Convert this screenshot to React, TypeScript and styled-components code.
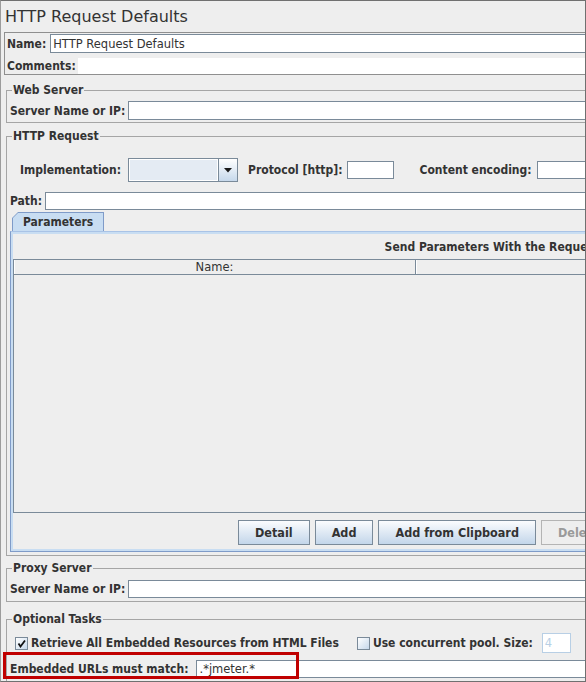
import styled, { createGlobalStyle } from "styled-components";

const BOLD = `"DejaVu Sans Condensed", "DejaVu Sans", "Liberation Sans", sans-serif`;
const PLAIN = `"DejaVu Sans", "Liberation Sans", sans-serif`;

const GlobalStyle = createGlobalStyle`
  html, body {
    margin: 0;
    padding: 0;
    background: #eeeeee;
  }
  body {
    font-family: ${PLAIN};
    color: #333333;
  }
`;

const Window = styled.div`
  position: relative;
  width: 586px;
  height: 682px;
  box-sizing: border-box;
  overflow: hidden;
  border: 1px solid #707070;
  border-left-color: #9c9c9c;
  background: #eeeeee;
`;

const Sheet = styled.div`
  width: 974px;
  display: flex;
  flex-direction: column;
`;

const Heading = styled.h1`
  margin: 0;
  height: 31px;
  padding-left: 4px;
  font: normal 16px/32px ${PLAIN};
  color: #333333;
`;

const NamePanel = styled.div`
  margin-left: 3px;
  border: 1px solid #8f8f8f;
  border-right: none;
  padding: 1px 0 0 2px;
  display: flex;
  flex-direction: column;
  gap: 5px;
`;

const Row = styled.div<{ $h: number; $mt?: number; $pl?: number; $gap?: number }>`
  display: flex;
  align-items: center;
  height: ${(p) => p.$h}px;
  margin-top: ${(p) => p.$mt ?? 0}px;
  padding-left: ${(p) => p.$pl ?? 0}px;
  gap: ${(p) => p.$gap ?? 4}px;
`;

const Label = styled.span<{ $ml?: number }>`
  margin-left: ${(p) => p.$ml ?? 0}px;
  font: bold 12px/14px ${BOLD};
  font-stretch: condensed;
  white-space: nowrap;
  color: #333333;
`;

const Field = styled.input<{ $w?: number; $h: number; $off?: boolean }>`
  box-sizing: border-box;
  flex: ${(p) => (p.$w ? "none" : "1")};
  width: ${(p) => (p.$w ? `${p.$w}px` : "auto")};
  min-width: 0;
  height: ${(p) => p.$h}px;
  margin: 0;
  padding: 0 2px;
  border: 1px solid ${(p) => (p.$off ? "#b8cfe5" : "#7a8a99")};
  border-radius: 0;
  background: #ffffff;
  font: 11.5px ${PLAIN};
  color: ${(p) => (p.$off ? "#b8cfe5" : "#333333")};
  outline: none;
`;

const CommentsArea = styled.div`
  flex: 1;
  height: 16px;
  background: #ffffff;
`;

const Group = styled.fieldset<{ $mt: number; $pb: number }>`
  margin: ${(p) => p.$mt}px 0 0 5px;
  padding: 0 0 ${(p) => p.$pb}px 3px;
  border: 1px solid #a5a5a5;
  border-right: none;
  min-inline-size: 0;
`;

const Legend = styled.legend`
  margin-left: 2px;
  padding: 0 1px;
  font: bold 12px/14px ${BOLD};
  font-stretch: condensed;
  color: #333333;
`;

const Combo = styled.div`
  display: flex;
  width: 110px;
  height: 24px;
  box-sizing: border-box;
  margin-left: 2px;
  border: 1px solid #7a8a99;
`;

const ComboValue = styled.div`
  flex: 1;
  border: 1px solid #ffffff;
  background: #e4ebf3;
`;

const ComboButton = styled.div`
  width: 18px;
  border-left: 1px solid #7a8a99;
  background: linear-gradient(#ffffff, #c6d8eb);
  display: flex;
  align-items: center;
  justify-content: center;
`;

const TabStrip = styled.div`
  display: flex;
  margin-top: 2px;
  padding-left: 2px;
`;

const TabEdge = styled.div`
  padding: 1px 1px 0 1px;
  background: #7f9bc8;
  clip-path: polygon(0 6px, 6px 0, 100% 0, 100% 100%, 0 100%);
`;

const Tab = styled.div`
  height: 18px;
  padding: 0 10px;
  background: #c8ddf2;
  clip-path: polygon(0 5px, 5px 0, 100% 0, 100% 100%, 0 100%);
  font: bold 12px/19px ${BOLD};
  font-stretch: condensed;
  color: #333333;
`;

const TabBody = styled.div`
  border: 1px solid #7f9bc8;
  border-top-color: #a9c3e6;
  border-right: none;
  padding: 2px 0 2px 2px;
  box-shadow: inset 2px 2px 0 #c8ddf2, inset 0 -2px 0 #c8ddf2;
`;

const Caption = styled.div`
  height: 25px;
  text-align: center;
  font: bold 12px/26px ${BOLD};
  font-stretch: condensed;
  color: #333333;
`;

const Table = styled.div`
  height: 254px;
  box-sizing: border-box;
  border: 1px solid #7a8a99;
  border-right: none;
`;

const HeaderRow = styled.div`
  display: flex;
  height: 14px;
  border-bottom: 1px solid #7a8a99;
`;

const HeaderCell = styled.div<{ $w?: number }>`
  flex: ${(p) => (p.$w ? "none" : "1")};
  width: ${(p) => (p.$w ? `${p.$w}px` : "auto")};
  border-right: 1px solid #7a8a99;
  box-shadow: inset 1px 0 0 #ffffff;
  text-align: center;
  font: 11.5px/14px ${PLAIN};
  color: #333333;
`;

const ButtonRow = styled.div`
  display: flex;
  gap: 5px;
  padding: 7px 0 4px 225px;
`;

const Button = styled.button<{ $off?: boolean }>`
  height: 25px;
  margin: 0;
  padding: 0 16px;
  border: 1px solid ${(p) => (p.$off ? "#b4b4b4" : "#7a8a99")};
  border-radius: 0;
  background: ${(p) => (p.$off ? "#eeeeee" : "linear-gradient(#fbfcfe, #dce7f3 55%, #c3d6ea)")};
  font: bold 12.5px ${BOLD};
  font-stretch: condensed;
  color: ${(p) => (p.$off ? "#9a9a9a" : "#333333")};
  white-space: nowrap;
`;

const CheckBox = styled.span<{ $ml?: number }>`
  flex: none;
  width: 13px;
  height: 13px;
  margin-left: ${(p) => p.$ml ?? 0}px;
  box-sizing: border-box;
  border: 1px solid #7a8a99;
  background: linear-gradient(135deg, #ffffff, #c6d8eb);
  display: flex;
  align-items: center;
  justify-content: center;
`;

const Highlight = styled.div`
  position: absolute;
  left: 2px;
  top: 651px;
  width: 296px;
  height: 27px;
  box-sizing: border-box;
  border: 3px solid #c00000;
  pointer-events: none;
`;

function Arrow() {
  return (
    <svg width="8" height="5" viewBox="0 0 8 5">
      <polygon points="0,0 8,0 4,4.5" fill="#1a1a1a" />
    </svg>
  );
}

function Tick() {
  return (
    <svg width="9" height="9" viewBox="0 0 9 9">
      <path d="M1.5 4.5 L3.5 7.5 L8 1.5" stroke="#111" strokeWidth="1.8" fill="none" />
    </svg>
  );
}

function App() {
  return (
    <>
      <GlobalStyle />
      <Window>
        <Sheet>
          <Heading>HTTP Request Defaults</Heading>

          <NamePanel>
            <Row $h={19}>
              <Label>Name:</Label>
              <Field $h={19} readOnly defaultValue="HTTP Request Defaults" />
            </Row>
            <Row $h={16} $gap={2}>
              <Label>Comments:</Label>
              <CommentsArea />
            </Row>
          </NamePanel>

          <Group $mt={8} $pb={2}>
            <Legend>Web Server</Legend>
            <Row $h={19} $mt={4} $gap={3}>
              <Label>Server Name or IP:</Label>
              <Field $h={19} readOnly />
            </Row>
          </Group>

          <Group $mt={6} $pb={3}>
            <Legend>HTTP Request</Legend>
            <Row $h={24} $mt={15} $pl={10} $gap={5}>
              <Label>Implementation:</Label>
              <Combo>
                <ComboValue />
                <ComboButton>
                  <Arrow />
                </ComboButton>
              </Combo>
              <Label $ml={5}>Protocol [http]:</Label>
              <Field $w={47} $h={18} readOnly />
              <Label $ml={20}>Content encoding:</Label>
              <Field $w={160} $h={18} readOnly />
            </Row>
            <Row $h={18} $mt={10} $gap={3}>
              <Label>Path:</Label>
              <Field $h={18} readOnly />
            </Row>

            <TabStrip>
              <TabEdge>
                <Tab>Parameters</Tab>
              </TabEdge>
            </TabStrip>
            <TabBody>
              <Caption>Send Parameters With the Request:</Caption>
              <Table>
                <HeaderRow>
                  <HeaderCell $w={401}>Name:</HeaderCell>
                  <HeaderCell>Value</HeaderCell>
                </HeaderRow>
              </Table>
              <ButtonRow>
                <Button>Detail</Button>
                <Button>Add</Button>
                <Button>Add from Clipboard</Button>
                <Button $off>Delete</Button>
                <Button $off>Up</Button>
                <Button $off>Down</Button>
              </ButtonRow>
            </TabBody>
          </Group>

          <Group $mt={5} $pb={3}>
            <Legend>Proxy Server</Legend>
            <Row $h={18} $mt={5} $gap={3}>
              <Label>Server Name or IP:</Label>
              <Field $h={18} readOnly />
            </Row>
          </Group>

          <Group $mt={10} $pb={8}>
            <Legend>Optional Tasks</Legend>
            <Row $h={20} $mt={7} $pl={5} $gap={3}>
              <CheckBox>
                <Tick />
              </CheckBox>
              <Label>Retrieve All Embedded Resources from HTML Files</Label>
              <CheckBox $ml={15} />
              <Label>Use concurrent pool. Size:</Label>
              <Field $w={29} $h={20} $off readOnly defaultValue="4" style={{ marginLeft: 6 }} />
            </Row>
            <Row $h={18} $mt={7} $gap={8}>
              <Label>Embedded URLs must match:</Label>
              <Field $h={18} readOnly defaultValue=".*jmeter.*" />
            </Row>
          </Group>
        </Sheet>
        <Highlight />
      </Window>
    </>
  );
}

export default App;
